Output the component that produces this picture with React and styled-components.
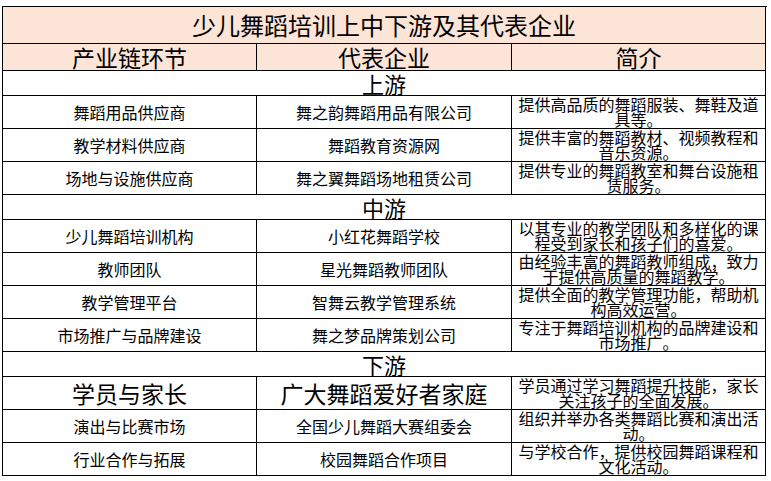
import React from "react";
import styled, { createGlobalStyle } from "styled-components";

const GlobalStyle = createGlobalStyle`
  html, body {
    margin: 0;
    padding: 0;
    background: #fff;
  }
  body {
    font-family: "Noto Sans CJK SC", "Noto Sans", sans-serif;
    color: #000;
  }
`;

const Page = styled.div`
  padding: 6px 0 0 2px;
  width: 771px;
  height: 481px;
  box-sizing: border-box;
`;

const Table = styled.div`
  display: grid;
  grid-template-columns: 254px 255px 254px;
  width: 764px;
  border-top: 1px solid #000;
  border-left: 1px solid #000;
`;

const Cell = styled.div`
  box-sizing: border-box;
  height: ${(p) => p.$h}px;
  border-right: 1px solid #000;
  border-bottom: 1px solid #000;
  display: flex;
  align-items: center;
  justify-content: center;
  text-align: center;
  font-size: ${(p) => p.$size || 16}px;
  line-height: ${(p) => p.$lh || 18}px;
  background: ${(p) => (p.$pink ? "#fce4d6" : "#fff")};
  padding: ${(p) => (p.$pad ? "0 2px" : "0")};
`;

const Span = styled(Cell)`
  grid-column: 1 / -1;
`;

const sections = [
  {
    name: "上游",
    rows: [
      ["舞蹈用品供应商", "舞之韵舞蹈用品有限公司", "提供高品质的舞蹈服装、舞鞋及道具等。"],
      ["教学材料供应商", "舞蹈教育资源网", "提供丰富的舞蹈教材、视频教程和音乐资源。"],
      ["场地与设施供应商", "舞之翼舞蹈场地租赁公司", "提供专业的舞蹈教室和舞台设施租赁服务。"],
    ],
  },
  {
    name: "中游",
    rows: [
      ["少儿舞蹈培训机构", "小红花舞蹈学校", "以其专业的教学团队和多样化的课程受到家长和孩子们的喜爱。"],
      ["教师团队", "星光舞蹈教师团队", "由经验丰富的舞蹈教师组成，致力于提供高质量的舞蹈教学。"],
      ["教学管理平台", "智舞云教学管理系统", "提供全面的教学管理功能，帮助机构高效运营。"],
      ["市场推广与品牌建设", "舞之梦品牌策划公司", "专注于舞蹈培训机构的品牌建设和市场推广。"],
    ],
  },
  {
    name: "下游",
    rows: [
      ["学员与家长", "广大舞蹈爱好者家庭", "学员通过学习舞蹈提升技能，家长关注孩子的全面发展。", true],
      ["演出与比赛市场", "全国少儿舞蹈大赛组委会", "组织并举办各类舞蹈比赛和演出活动。"],
      ["行业合作与拓展", "校园舞蹈合作项目", "与学校合作，提供校园舞蹈课程和文化活动。"],
    ],
  },
];

export default function App() {
  return (
    <Page>
      <GlobalStyle />
      <Table>
        <Span $h={37} $pink $size={24} $lh={30}>
          少儿舞蹈培训上中下游及其代表企业
        </Span>
        <Cell $h={27} $pink $size={23} $lh={25}>产业链环节</Cell>
        <Cell $h={27} $pink $size={23} $lh={25}>代表企业</Cell>
        <Cell $h={27} $pink $size={23} $lh={25}>简介</Cell>
        {sections.map((s) => (
          <React.Fragment key={s.name}>
            <Span $h={25} $size={22} $lh={23}>{s.name}</Span>
            {s.rows.map(([stage, company, desc, big]) => (
              <React.Fragment key={stage}>
                <Cell $h={33} $size={big ? 23 : 16} $lh={big ? 28 : 20}>{stage}</Cell>
                <Cell $h={33} $size={big ? 23 : 16} $lh={big ? 28 : 20}>{company}</Cell>
                <Cell $h={33} $size={16} $lh={15.5} $pad>{desc}</Cell>
              </React.Fragment>
            ))}
          </React.Fragment>
        ))}
      </Table>
    </Page>
  );
}
